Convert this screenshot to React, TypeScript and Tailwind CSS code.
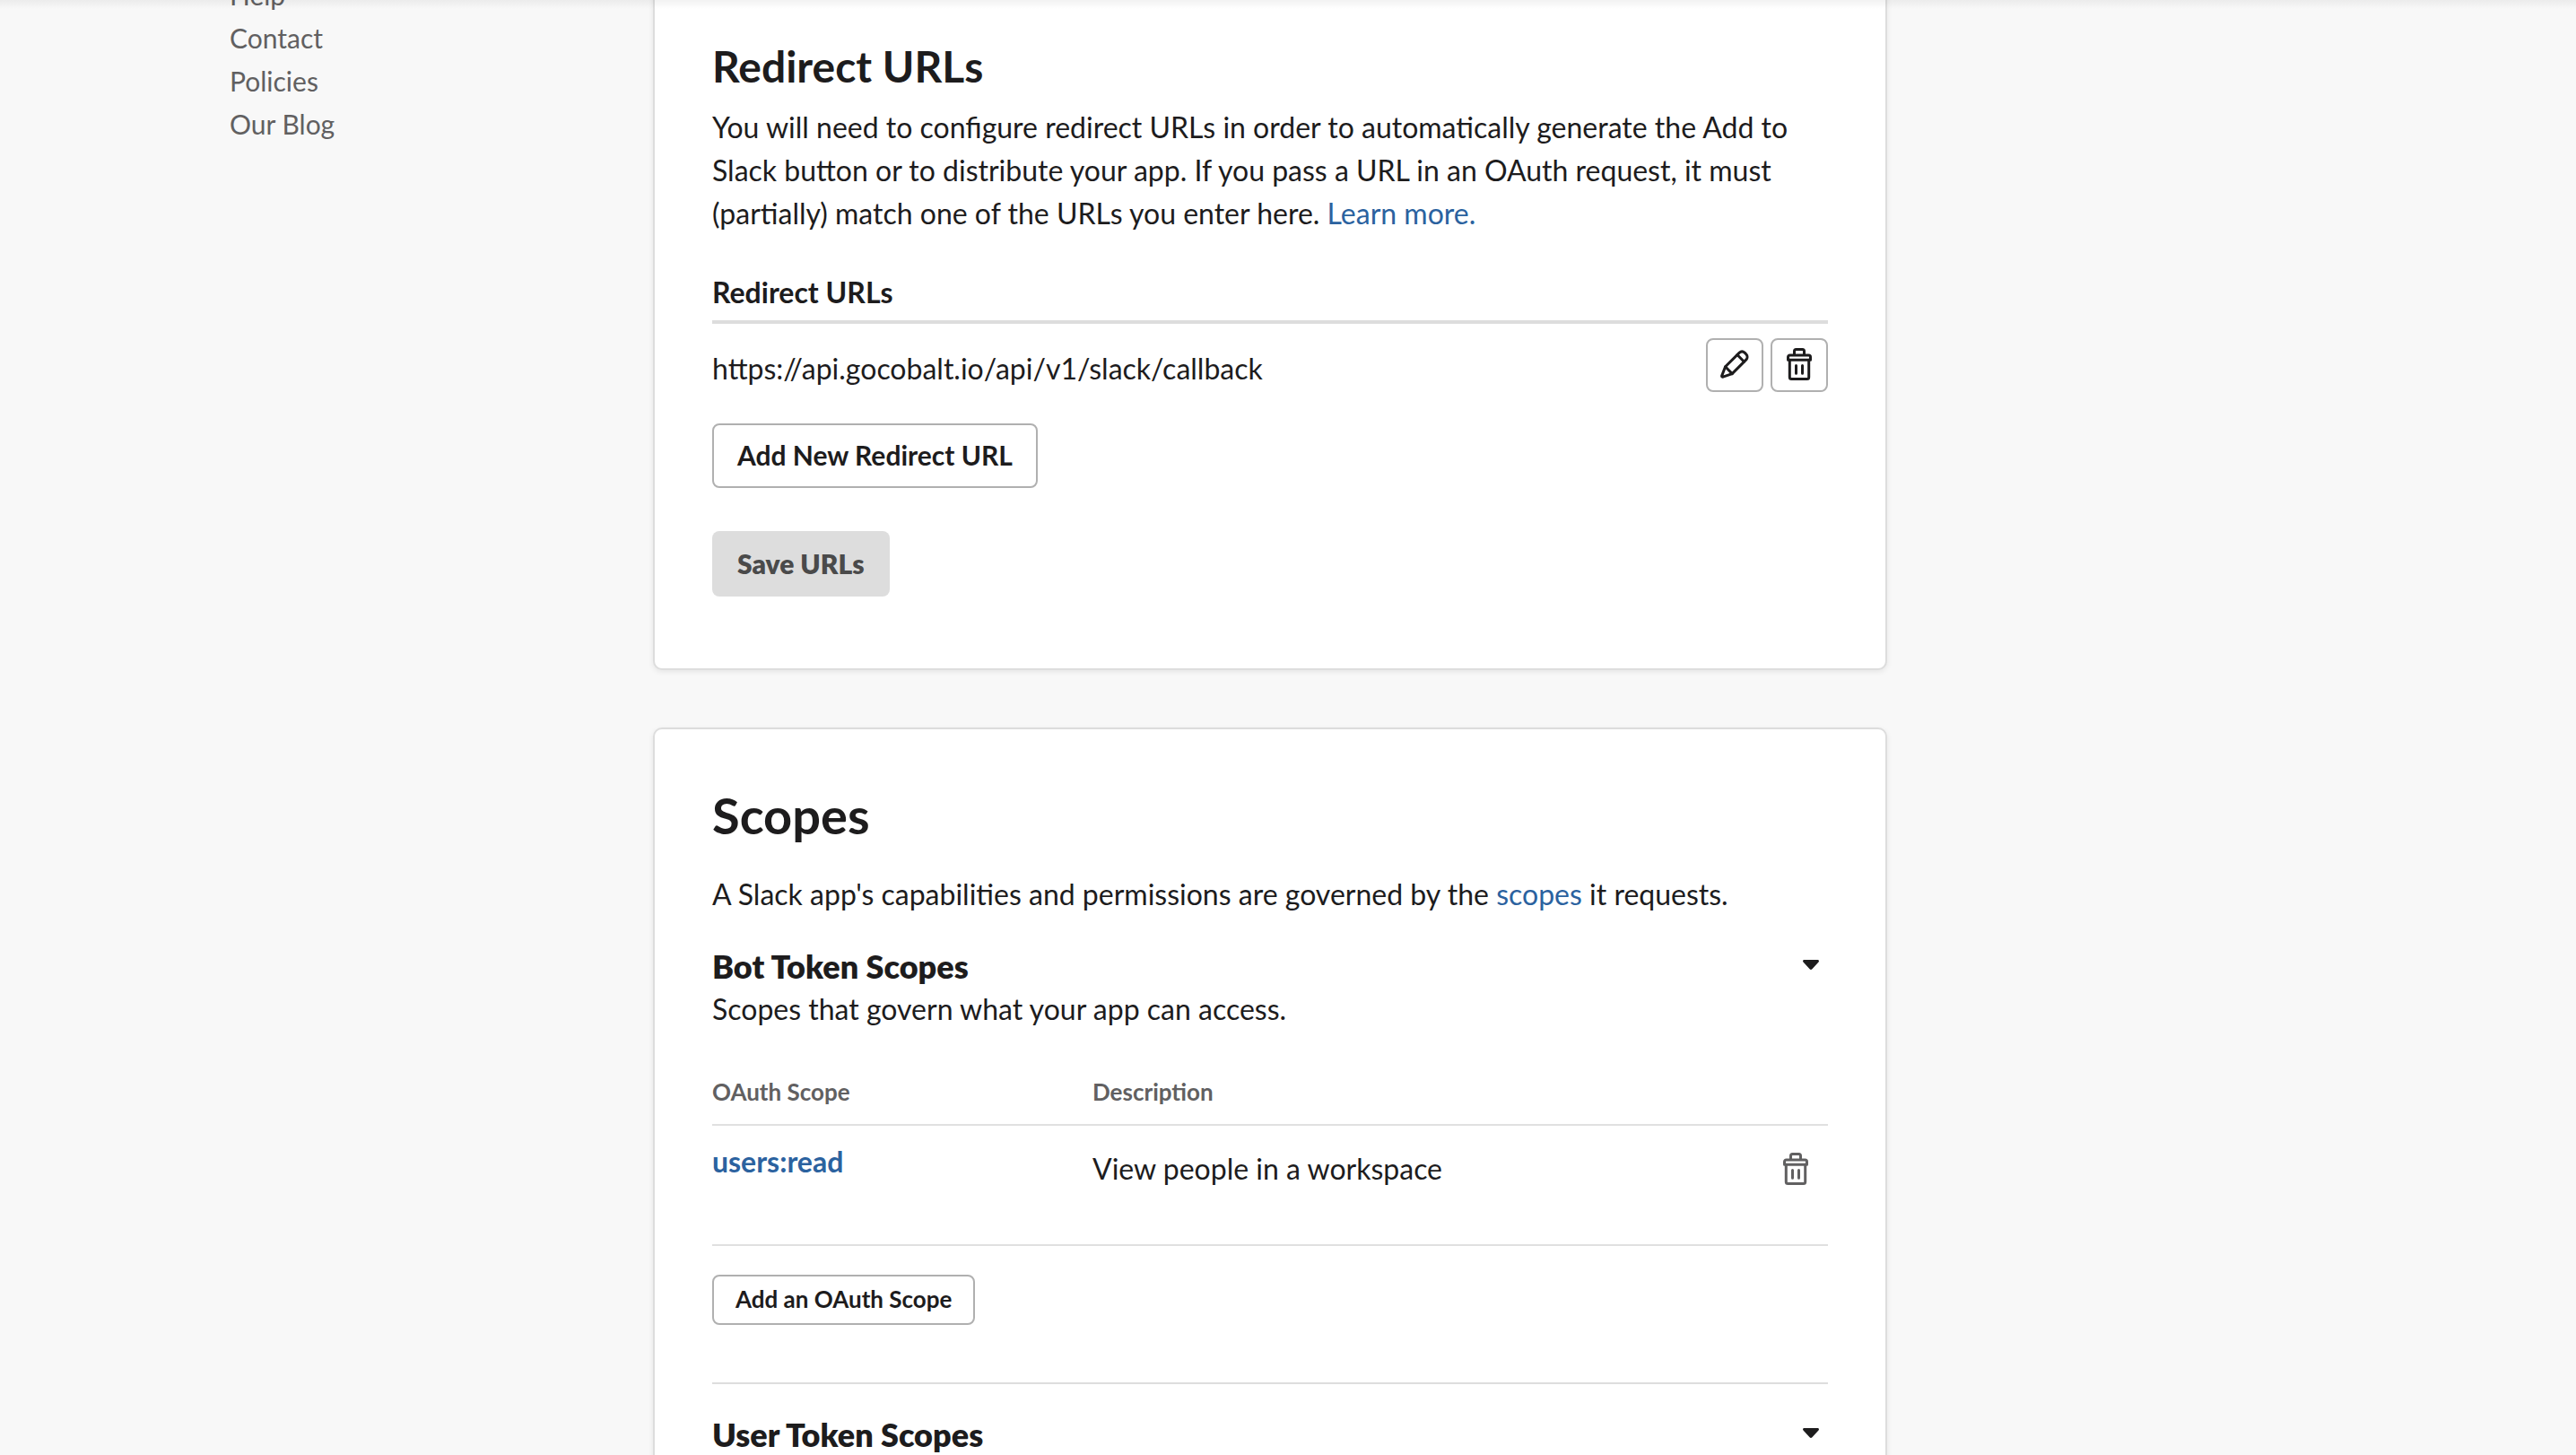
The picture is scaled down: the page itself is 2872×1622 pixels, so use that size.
import type { ReactNode } from "react";

const footerLinks = ["Help", "Contact", "Policies", "Our Blog"];

function TrashIcon() {
  return (
    <svg
      viewBox="0 0 28 36"
      className="h-9 w-7"
      fill="none"
      stroke="currentColor"
      strokeWidth="3"
      strokeLinecap="round"
      strokeLinejoin="round"
      aria-hidden="true"
    >
      <path d="M8.5 7V3.5a2 2 0 0 1 2-2h7a2 2 0 0 1 2 2V7" />
      <path d="M1.5 13.2V10a2 2 0 0 1 2-2h21a2 2 0 0 1 2 2v3.2z" />
      <path d="M3.3 13.2v19.3a2 2 0 0 0 2 2h17.4a2 2 0 0 0 2-2V13.2" />
      <path d="M10.5 19.5v8.7M17.5 19.5v8.7" />
    </svg>
  );
}

function PencilIcon() {
  return (
    <svg
      viewBox="0 0 32 32"
      className="size-8"
      fill="none"
      stroke="currentColor"
      strokeWidth="3"
      strokeLinecap="round"
      strokeLinejoin="round"
      aria-hidden="true"
    >
      <path d="M5.6 18.8 21.3 3.1a4.4 4.4 0 0 1 5.8 0l1.8 1.9a4.4 4.4 0 0 1 0 5.9L13.2 26.6 3 30.2a1 1 0 0 1-1.3-1.3z" />
      <path d="m5.6 18.8 7.6 7.8M18.9 5.5l7.6 7.8" />
    </svg>
  );
}

function CaretIcon() {
  return (
    <svg viewBox="0 0 18 14" className="h-3.5 w-[18px]" fill="currentColor" aria-hidden="true">
      <path d="M1.6 0h14.8c1.5 0 2 1.5 1.1 2.5l-7.1 7.7c-.8.9-2 .9-2.800 0L.5 2.5C-.4 1.500.1 0 1.600 0z" />
    </svg>
  );
}

function Card({ children, className }: { children: ReactNode; className: string }) {
  return (
    <section
      className={`rounded-[10px] border-2 border-[#dddddd] bg-white px-16 shadow-[0_2px_6px_rgba(0,0,0,0.08)] ${className}`}
    >
      {children}
    </section>
  );
}

function IconButton({ label, children }: { label: string; children: ReactNode }) {
  return (
    <button
      type="button"
      aria-label={label}
      className="flex h-[60px] w-16 items-center justify-center rounded-lg border-2 border-[#b0b0b0] bg-white pb-0.5"
    >
      {children}
    </button>
  );
}

function ScopeToggle({ title }: { title: string }) {
  return (
    <h3>
      <button
        type="button"
        className="flex w-full items-center justify-between pr-2.5 text-left text-4xl/[48px] font-extrabold"
      >
        {title}
        <CaretIcon />
      </button>
    </h3>
  );
}

export default function App() {
  return (
    <div className="relative h-screen overflow-hidden bg-[#f8f8f8] font-['Lato',sans-serif] text-[32px]/[48px] text-[#1d1c1d]">
      <div className="absolute inset-x-0 top-0 h-2.5 bg-linear-to-b from-black/5 to-transparent" />
      <div className="flex px-64">
        <nav className="-mt-[30px] w-1/5 shrink-0 text-[30px] text-[#616061]">
          <ul>
            {footerLinks.map((link) => (
              <li key={link}>
                <a href="#">{link}</a>
              </li>
            ))}
          </ul>
        </nav>

        <main className="-mt-6 flex max-w-[1376px] flex-1 flex-col gap-16">
          <Card className="pt-16 pb-20">
            <h2 className="text-5xl/[64px] font-bold">Redirect URLs</h2>
            <p className="mt-3">
              You will need to configure redirect URLs in order to automatically generate the Add to Slack button or to
              distribute your app. If you pass a URL in an OAuth request, it must (partially) match one of the URLs you
              enter here.{" "}
              <a href="#" className="text-[#2b629f]">
                Learn more.
              </a>
            </p>
            <h3 className="mt-10 border-b-4 border-[#dddddd] pb-[7px] font-bold">Redirect URLs</h3>
            <div className="mt-4 flex items-start justify-between">
              <p className="pt-2.5">https://api.gocobalt.io/api/v1/slack/callback</p>
              <div className="flex gap-2">
                <IconButton label="Edit">
                  <PencilIcon />
                </IconButton>
                <IconButton label="Delete">
                  <TrashIcon />
                </IconButton>
              </div>
            </div>
            <button
              type="button"
              className="mt-[35px] block h-[72px] rounded-lg border-2 border-[#b0b0b0] bg-white px-[26px] pb-0.5 text-[30px] font-bold"
            >
              Add New Redirect URL
            </button>
            <button
              type="button"
              disabled
              className="mt-12 block h-[73px] rounded-lg bg-[#dddddd] px-7 pb-0.5 text-[30px] font-extrabold text-[#4a4a4a]"
            >
              Save URLs
            </button>
          </Card>

          <Card className="pt-[66px] pb-16">
            <h2 className="text-[56px]/[60px] font-bold">Scopes</h2>
            <p className="mt-[34px]">
              A Slack app's capabilities and permissions are governed by the{" "}
              <a href="#" className="text-[#2b629f]">
                scopes
              </a>{" "}
              it requests.
            </p>
            <div className="mt-8">
              <ScopeToggle title="Bot Token Scopes" />
              <p>Scopes that govern what your app can access.</p>
            </div>
            <table className="mt-12 w-full table-fixed border-collapse text-left">
              <thead>
                <tr className="border-b-2 border-[#e0e0e0] text-[26px]/[40px] text-[#616061]">
                  <th className="w-[424px] pb-4 font-bold">OAuth Scope</th>
                  <th className="pb-4 font-bold">Description</th>
                  <th className="w-20 pb-4" aria-label="Actions" />
                </tr>
              </thead>
              <tbody>
                <tr className="h-[134px] border-b-2 border-[#e0e0e0] align-top">
                  <td className="pt-4 font-bold text-[#2b629f]">
                    <a href="#">users:read</a>
                  </td>
                  <td className="pt-6">View people in a workspace</td>
                  <td className="pt-[30px]">
                    <button type="button" aria-label="Remove scope" className="ml-[30px] block text-[#616061]">
                      <TrashIcon />
                    </button>
                  </td>
                </tr>
              </tbody>
            </table>
            <button
              type="button"
              className="mt-8 block h-14 rounded-lg border-2 border-[#b0b0b0] bg-white px-6 pb-0.5 text-[26px]/[40px] font-bold"
            >
              Add an OAuth Scope
            </button>
            <div className="mt-16 border-t-2 border-[#dddddd] pt-8">
              <ScopeToggle title="User Token Scopes" />
            </div>
          </Card>
        </main>
      </div>
    </div>
  );
}
